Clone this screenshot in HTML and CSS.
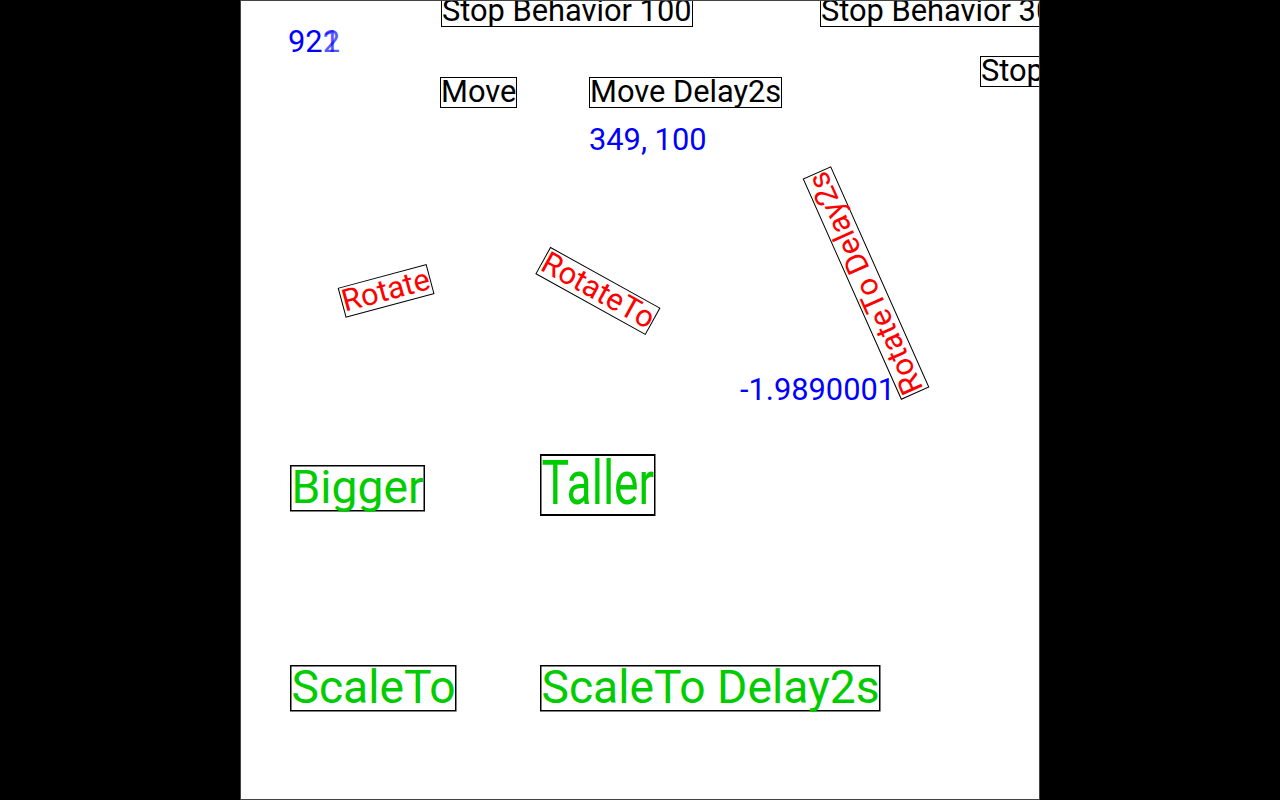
FILE: index.html
```html
<!DOCTYPE html>
<html lang="en">

<head>
    <meta charset="UTF-8">
    <meta name="viewport" content="width=device-width, initial-scale=1.0">
    <title>behaviors</title>
    <link rel="stylesheet" href="styles.css">
</head>

<body>
    <div class="stage">
        <span class="label blue counter">92<span class="blur"><span>1</span><span>2</span></span></span>

        <span class="box stop-100">Stop Behavior 100</span>
        <span class="box stop-30">Stop Behavior 300</span>
        <span class="box stop">Stop Behavior</span>

        <span class="box move">Move</span>
        <span class="box move-delay">Move Delay2s</span>
        <span class="label blue pos">349, 100</span>

        <span class="box red turn rotate">Rotate</span>
        <span class="box red turn rotate-to">RotateTo</span>
        <span class="box red turn rotate-delay">RotateTo Delay2s</span>
        <span class="label blue angle">-1.9890001</span>

        <span class="box green grow bigger">Bigger</span>
        <span class="box green grow taller">Taller</span>
        <span class="box green grow scale-to">ScaleTo</span>
        <span class="box green grow scale-delay">ScaleTo Delay2s</span>
    </div>
</body>

</html>
```

FILE: styles.css
```css
html,
body {
    margin: 0;
    background-color: black;
    height: 100%;
}

body {
    font-family: Roboto, 'Liberation Sans', sans-serif;
}

.stage {
    position: relative;
    box-sizing: border-box;
    width: 800px;
    height: 800px;
    margin-left: 240px;
    background-color: white;
    border: 1px solid #444;
    overflow: hidden;
}

.label,
.box {
    position: absolute;
    font-size: 30.8px;
    line-height: 27px;
    height: 29px;
    white-space: nowrap;
}

.box {
    border: 1px solid black;
    color: black;
}

.blue {
    color: blue;
}

.red {
    color: red;
}

.green {
    color: #00cc00;
}

/* counter */
.counter {
    left: 47px;
    top: 27px;
}

.blur {
    display: inline-grid;
}

.blur span {
    grid-area: 1 / 1;
    opacity: 0.65;
}

/* stop */
.stop-100 {
    left: 200px;
    top: -5px;
}

.stop-30 {
    left: 579px;
    top: -5px;
}

.stop {
    left: 739px;
    top: 55px;
}

/* move */
.move {
    left: 199px;
    top: 76px;
}

.move-delay {
    left: 348px;
    top: 76px;
}

.pos {
    left: 348px;
    top: 125px;
}

/* rotate */
.turn {
    transform-origin: center;
}

.rotate {
    left: 145px;
    top: 290px;
    transform: translate(-50%, -50%) rotate(-15deg);
}

.rotate-to {
    left: 357px;
    top: 290px;
    transform: translate(-50%, -50%) rotate(29deg);
}

.rotate-delay {
    left: 625px;
    top: 282px;
    transform: translate(-50%, -50%) rotate(-114deg);
}

.angle {
    left: 499px;
    top: 375px;
}

/* scale */
.grow {
    transform-origin: 0 0;
}

.bigger {
    left: 49px;
    top: 464px;
    transform: scale(1.5);
}

.taller {
    left: 299px;
    top: 453px;
    transform: scale(1.5, 2);
}

.scale-to {
    left: 49px;
    top: 664px;
    transform: scale(1.5);
}

.scale-delay {
    left: 299px;
    top: 664px;
    transform: scale(1.5);
}
```
